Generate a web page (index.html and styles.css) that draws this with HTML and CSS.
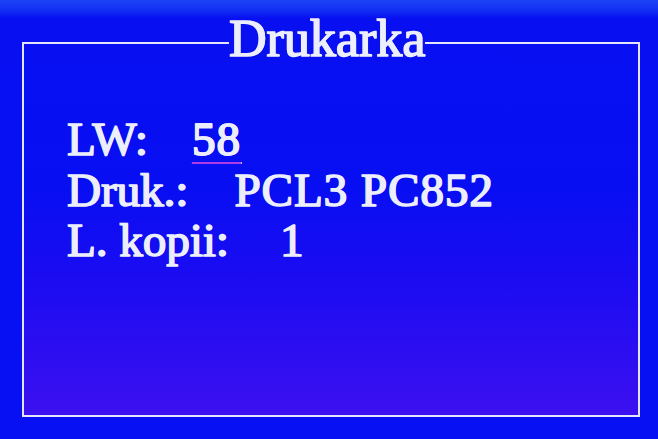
FILE: index.html
```html
<!DOCTYPE html>
<html lang="pl">
<head>
<meta charset="utf-8">
<title>Drukarka</title>
<link rel="stylesheet" href="styles.css">
</head>
<body>
<div class="screen">
  <div class="frame">
    <div class="head">
      <div class="rule rule-left"></div>
      <div class="title">Drukarka</div>
      <div class="rule rule-right"></div>
    </div>
    <div class="body">
      <div class="row"><span class="label">LW:</span><span class="value gap-lw selected">58</span></div>
      <div class="row"><span class="label">Druk.:</span><span class="value gap-druk">PCL3 PC852</span></div>
      <div class="row"><span class="label">L. kopii:</span><span class="value gap-kopie">1</span></div>
    </div>
  </div>
</div>
</body>
</html>
```

FILE: styles.css
```css
html, body {
  margin: 0;
  padding: 0;
}
body {
  width: 658px;
  height: 439px;
  overflow: hidden;
  background: linear-gradient(to bottom, #1d43f6 0px, #1230f4 10px, #0810f2 18px, #0610f2 100%);
  font-family: "Liberation Serif", "Times New Roman", serif;
  color: #eceefc;
}
.screen {
  padding: 13px 18px 0 22px;
}
.frame {
  display: flex;
  flex-direction: column;
}
.head {
  display: flex;
  height: 52px;
}
.rule {
  margin-top: 29px;
  border-top: 2px solid #e4e4fb;
}
.rule-left {
  width: 205px;
  border-left: 2px solid #e4e4fb;
}
.rule-right {
  flex: 1;
  border-right: 2px solid #e4e4fb;
}
.title {
  font-size: 52px;
  line-height: 52px;
  -webkit-text-stroke: 1.4px #eceefc;
  text-shadow: 0.8px 0 0 #eceefc;
  white-space: nowrap;
}
.body {
  box-sizing: content-box;
  padding: 49px 0 0 43px;
  height: 301px;
  border: 2px solid #e4e4fb;
  border-top: 0;
  background: linear-gradient(to bottom, #0610f2 0%, #080ef2 35%, #1e0cf2 65%, #3c10f0 100%);
}
.row {
  font-size: 47px;
  line-height: 50.5px;
  white-space: nowrap;
  -webkit-text-stroke: 1.4px #eceefc;
  text-shadow: 0.8px 0 0 #eceefc;
}
.value {
  letter-spacing: 1px;
}
.gap-lw { margin-left: 44px; }
.gap-druk { margin-left: 46px; }
.gap-kopie { margin-left: 51px; }
.selected {
  padding-right: 1px;
  text-decoration: underline;
  text-decoration-color: #b03ce8;
  text-decoration-thickness: 2px;
  text-underline-offset: 7px;
}
```
